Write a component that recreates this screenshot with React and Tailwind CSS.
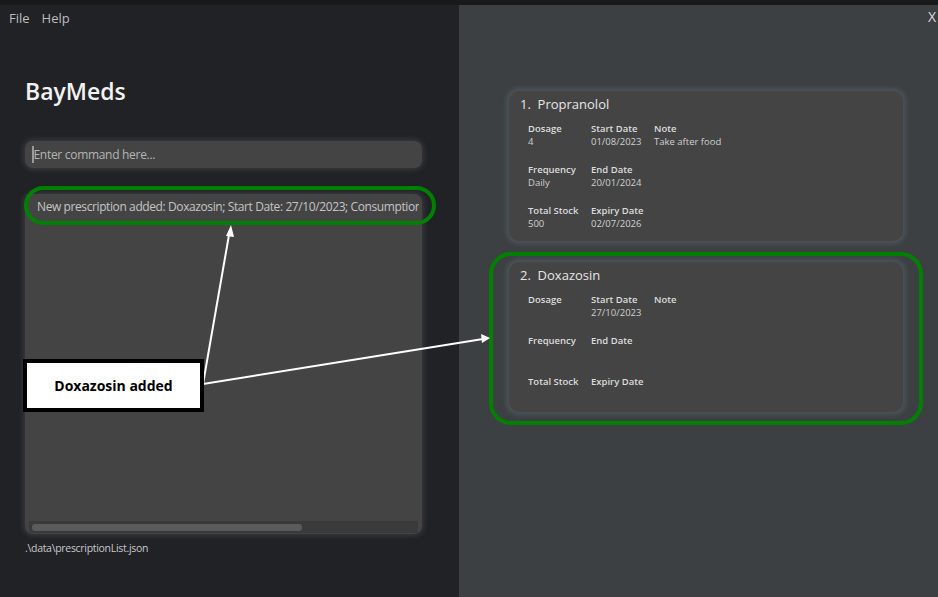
const FONT = { fontFamily: '"Open Sans", "Noto Sans", sans-serif' };

const meds = [
  {
    idx: 1,
    name: "Propranolol",
    rows: [
      [["Dosage", "4"], ["Start Date", "01/08/2023"], ["Note", "Take after food"]],
      [["Frequency", "Daily"], ["End Date", "20/01/2024"]],
      [["Total Stock", "500"], ["Expiry Date", "02/07/2026"]],
    ],
  },
  {
    idx: 2,
    name: "Doxazosin",
    rows: [
      [["Dosage", ""], ["Start Date", "27/10/2023"], ["Note", ""]],
      [["Frequency", ""], ["End Date", ""]],
      [["Total Stock", ""], ["Expiry Date", ""]],
    ],
  },
];

function MedCard({ med }) {
  return (
    <div className="w-[394px] h-[150px] rounded-[10px] bg-[#444444] shadow-[0_0_4px_3px_#4b5358] pl-[11px] pt-[4px]">
      <div className="text-[13px] leading-[18px] text-[#e6e6e6]">
        {med.idx}.&nbsp;&nbsp;{med.name}
      </div>
      <div className="pl-[8px] pt-[9px] flex flex-col">
        {med.rows.map((row, i) => (
          <div key={i} className="flex h-[41px]">
            {row.map(([label, value], j) => (
              <div key={j} className="w-[63px] flex flex-col">
                <span className="text-[9.5px] leading-[13px] font-semibold text-[#dcdcdc] whitespace-nowrap">{label}</span>
                <span className="text-[9.5px] leading-[13px] text-[#d0d0d0] whitespace-nowrap">{value}</span>
              </div>
            ))}
          </div>
        ))}
      </div>
    </div>
  );
}

export default function App() {
  return (
    <div className="relative w-[938px] h-[597px] flex flex-col overflow-hidden" style={FONT}>
      <div className="h-[5px] bg-[#1a1a1a]" />
      <div className="flex flex-1">
        {/* left pane */}
        <div className="w-[459px] bg-[#212226] flex flex-col">
          <div className="flex gap-[12px] pl-[9px] pt-[4px] text-[13px] leading-[18px] text-[#bdbdbd]">
            <span>File</span>
            <span>Help</span>
          </div>
          <div className="pl-[25px] pt-[48px] text-[23px] leading-[32px] font-semibold text-[#f2f2f2]">BayMeds</div>
          <div className="ml-[25px] mt-[34px] w-[397px] h-[27px] rounded-[8px] bg-[#444444] shadow-[0_0_5px_2px_#35393d] flex items-center pl-[7px]">
            <div className="w-[1.5px] h-[17px] bg-[#9a9a9a]" />
            <span className="text-[12px] tracking-[-0.3px] text-[#b4b4b4]">Enter command here...</span>
          </div>
          <div className="ml-[25px] mt-[26px] w-[397px] h-[340px] rounded-[8px] bg-[#444444] shadow-[0_0_5px_2px_#35393d] flex flex-col overflow-hidden">
            <div className="flex-1 min-w-0 w-full pl-[12px] pr-[3px] pt-[4px] overflow-hidden">
              <div className="w-full overflow-hidden whitespace-nowrap text-[12px] leading-[18px] tracking-[-0.4px] text-[#c4c4c4]">
                New prescription added: Doxazosin; Start Date: 27/10/2023; Consumption Count: 0
              </div>
            </div>
            <div className="mx-[4px] mb-[1px] h-[12px] bg-[#3a3a3a] flex items-center">
              <div className="ml-[3px] w-[270px] h-[7px] rounded-[3px] bg-[#5b5b5b]" />
            </div>
          </div>
          <div className="pl-[25px] pt-[7px] text-[10.5px] leading-[14px] text-[#c8c8c8] tracking-[-0.3px]">.\data\prescriptionList.json</div>
        </div>

        {/* right pane */}
        <div className="flex-1 bg-[#3c4043] relative flex flex-col">
          <span className="absolute right-[2px] top-[3px] text-[14px] leading-[18px] text-[#dcdcdc]">X</span>
          <div className="pl-[50px] pt-[86px] flex flex-col gap-[21px]">
            {meds.map((m) => (
              <MedCard key={m.idx} med={m} />
            ))}
          </div>
        </div>
      </div>

      {/* annotations */}
      <div className="absolute left-[24px] top-[186px] w-[412px] h-[39px] rounded-full border-[4px] border-[#008000]" />
      <div className="absolute left-[489px] top-[252px] w-[434px] h-[173px] rounded-[22px] border-[4px] border-[#008000]" />
      <svg className="absolute left-0 top-0 pointer-events-none" width="938" height="597">
        <line x1="203" y1="384" x2="229.5" y2="232" stroke="#ffffff" strokeWidth="2" />
        <polygon points="231,225 226,236 234,237" fill="#ffffff" />
        <line x1="203" y1="384" x2="483" y2="339" stroke="#ffffff" strokeWidth="2" />
        <polygon points="490,338 481,334 482,343" fill="#ffffff" />
      </svg>
      <div className="absolute left-[23px] top-[359px] w-[181px] h-[53px] border-[4px] border-black bg-white flex items-center justify-center">
        <span className="text-[14px] font-bold text-black">Doxazosin added</span>
      </div>
    </div>
  );
}
